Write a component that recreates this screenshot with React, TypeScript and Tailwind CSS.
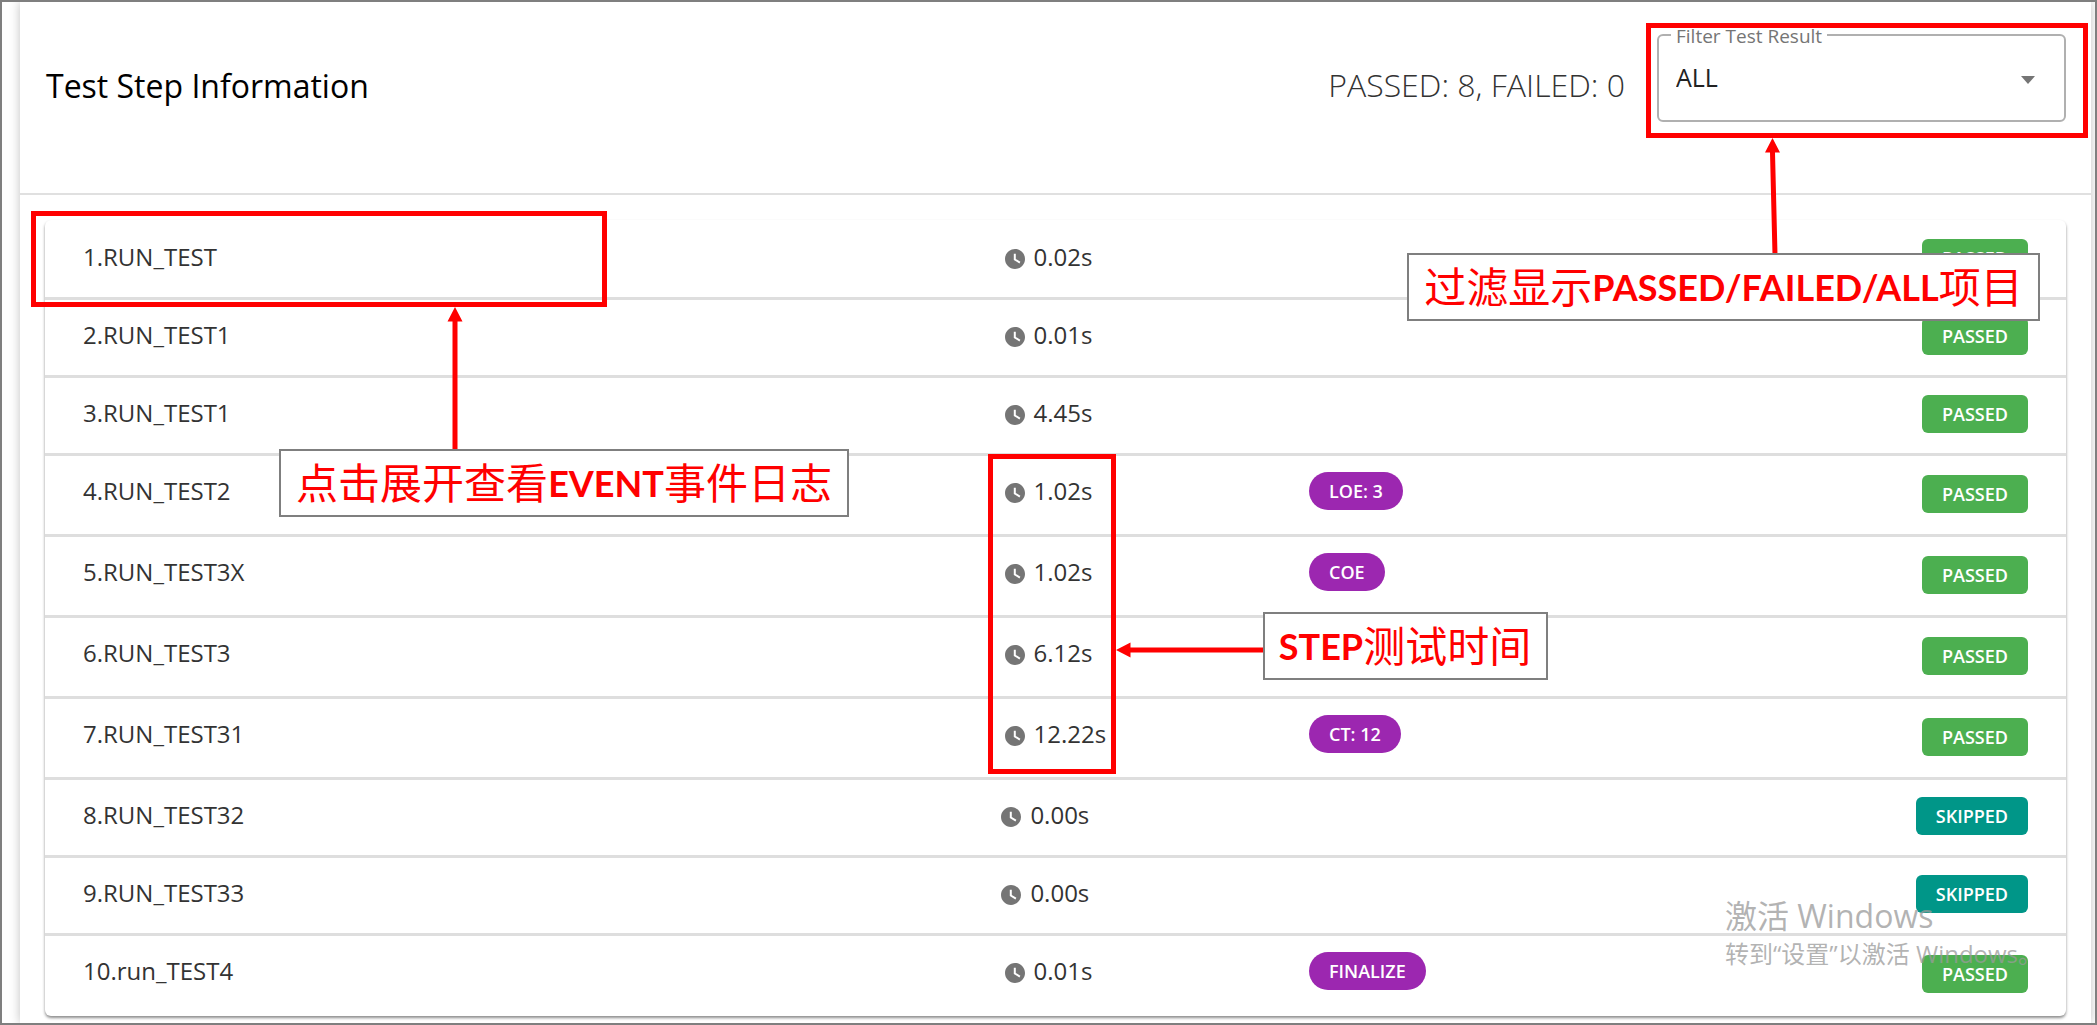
import { useState } from "react";

type Result = "PASSED" | "FAILED" | "SKIPPED";

interface Step {
  name: string;
  time: string;
  chip?: string;
  tall?: boolean;
  result: Result;
}

const steps: Step[] = [
  { name: "1.RUN_TEST", time: "0.02s", result: "PASSED" },
  { name: "2.RUN_TEST1", time: "0.01s", result: "PASSED" },
  { name: "3.RUN_TEST1", time: "4.45s", result: "PASSED" },
  { name: "4.RUN_TEST2", time: "1.02s", chip: "LOE: 3", tall: true, result: "PASSED" },
  { name: "5.RUN_TEST3X", time: "1.02s", chip: "COE", tall: true, result: "PASSED" },
  { name: "6.RUN_TEST3", time: "6.12s", tall: true, result: "PASSED" },
  { name: "7.RUN_TEST31", time: "12.22s", chip: "CT: 12", tall: true, result: "PASSED" },
  { name: "8.RUN_TEST32", time: "0.00s", result: "SKIPPED" },
  { name: "9.RUN_TEST33", time: "0.00s", result: "SKIPPED" },
  { name: "10.run_TEST4", time: "0.01s", chip: "FINALIZE", tall: true, result: "PASSED" },
];

const badgeColors: Record<Result, string> = {
  PASSED: "bg-[#4caf50]",
  FAILED: "bg-[#f44336]",
  SKIPPED: "bg-[#009688]",
};

function ClockIcon() {
  return (
    <svg viewBox="0 0 24 24" className="mt-1 size-6 shrink-0 fill-[#757575]" aria-hidden="true">
      <path d="M12 2C6.500 2 2 6.500 2 12s4.500 10 10 10 10-4.500 10-10S17.500 2 12 2zm4.400 14.400L10.800 13V6.800h2v5.200l4.600 2.800-1 1.600z" />
    </svg>
  );
}

function StepRow({ step }: { step: Step }) {
  return (
    <li className="border-b-[3px] border-[#dedede] last:border-b-0">
      <button
        type="button"
        className={`grid w-full grid-cols-[6fr_2fr_4fr_auto] items-start pr-[38px] pl-[38px] text-left text-2xl leading-[38px] text-[#333] ${
          step.tall ? "h-[78px] pt-4" : "h-[75px] pt-4"
        }`}
      >
        <span>{step.name}</span>
        <span className="flex items-center gap-[7px]">
          <ClockIcon />
          {step.time}
        </span>
        <span className="flex">
          {step.chip && (
            <span className="h-[38px] rounded-full bg-[#9c27b0] px-5 text-lg leading-[38px] font-semibold text-white">
              {step.chip}
            </span>
          )}
        </span>
        <span
          className={`h-[38px] rounded-md px-5 text-lg leading-[38px] font-semibold text-white ${
            badgeColors[step.result]
          } ${step.tall ? "mt-[3px]" : "mt-px"}`}
        >
          {step.result}
        </span>
      </button>
    </li>
  );
}

const callout =
  "absolute flex h-[68px] items-center justify-center border-2 border-[#7f7f7f] bg-white pb-1 whitespace-nowrap text-[42px] leading-none text-[#f00] font-['Noto_Sans_CJK_SC',sans-serif]";

function Latin({ children }: { children: string }) {
  return <b className="pt-1 font-['Lato',sans-serif] text-4xl font-bold">{children}</b>;
}

export default function App() {
  const [filter, setFilter] = useState("ALL");
  const passed = 8;
  const failed = 0;
  const visible = steps.filter((s) => filter === "ALL" || s.result === filter);

  return (
    <div className="relative min-h-screen overflow-hidden border-2 border-[#7f7f7f] bg-white pr-1 pl-[18px] font-['Open_Sans','Noto_Sans_CJK_SC',sans-serif]">
      <main className="min-h-[1021px] bg-white shadow-[0_0_10px_rgba(0,0,0,0.25)]">
        <header className="flex h-[193px] items-start justify-between border-b-2 border-[#e0e0e0] pr-[25px] pl-[26px]">
          <h1 className="mt-[60px] text-[32px] leading-[48px] text-black">Test Step Information</h1>
          <div className="flex items-start gap-8">
            <p className="mt-[59px] text-[32px] leading-[48px] font-light text-[#333]">
              PASSED: {passed}, FAILED: {failed}
            </p>
            <div className="relative mt-8 w-[409px]">
              <label
                htmlFor="result-filter"
                className="absolute -top-[10px] left-[14px] bg-white px-[5px] text-[19px] leading-6 text-[#757575]"
              >
                Filter Test Result
              </label>
              <select
                id="result-filter"
                value={filter}
                onChange={(e) => setFilter(e.target.value)}
                className="h-[88px] w-full appearance-none rounded-md border-2 border-[#b0b0b0] bg-white pr-12 pl-[17px] text-[25px] text-[#222]"
              >
                <option>ALL</option>
                <option>PASSED</option>
                <option>FAILED</option>
              </select>
              <svg
                viewBox="0 0 14 8"
                className="pointer-events-none absolute top-[42px] right-[31px] h-2 w-[14px] fill-[#757575]"
                aria-hidden="true"
              >
                <path d="M0 0h14L7 8z" />
              </svg>
            </div>
          </div>
        </header>
        <ul className="mt-[25px] mr-[25px] ml-[25px] rounded-md bg-white pt-[2px] pb-[2px] shadow-[0_2px_3px_rgba(0,0,0,0.45)]">
          {visible.map((step) => (
            <StepRow key={step.name} step={step} />
          ))}
        </ul>
      </main>

      <div className="pointer-events-none absolute top-[892px] right-[68px] w-[302px] whitespace-nowrap text-[#9a9a9a]/75">
        <p className="text-[32px] leading-[44px]">激活 Windows</p>
        <p className="text-2xl leading-8">转到“设置”以激活 Windows。</p>
      </div>

      <div className="pointer-events-none">
        <div className="absolute top-[209px] left-[29px] h-24 w-[576px] border-5 border-[#f00]" />
        <svg viewBox="0 0 16 144" className="absolute top-[305px] left-[445px] h-36 w-4 fill-[#f00]" aria-hidden="true">
          <path d="M8 0l7.500 14.500h-5V144h-5V14.500h-5z" />
        </svg>
        <div className={`${callout} top-[447px] left-[277px] w-[570px]`}>
          点击展开查看<Latin>EVENT</Latin>事件日志
        </div>

        <div className="absolute top-[21px] right-[7px] h-[115px] w-[442px] border-5 border-[#f00]" />
        <svg viewBox="0 0 18 117" className="absolute top-[136px] right-[312px] h-[117px] w-[18px] fill-[#f00]" aria-hidden="true">
          <path d="M7.500 0L15 14.500h-5L12.500 117h-5L5 14.500H0z" />
        </svg>
        <div className={`${callout} top-[251px] right-[55px] w-[633px]`}>
          过滤显示<Latin>PASSED/FAILED/ALL</Latin>项目
        </div>

        <div className="absolute top-[452px] left-1/2 -ml-[61px] h-80 w-32 border-5 border-[#f00]" />
        <svg viewBox="0 0 148 16" className="absolute top-[640px] left-1/2 ml-[67px] h-4 w-[148px] fill-[#f00]" aria-hidden="true">
          <path d="M0 8L14.500.500v5H148v5H14.500v5z" />
        </svg>
        <div className={`${callout} top-[610px] left-1/2 ml-[214px] w-[285px]`}>
          <Latin>STEP</Latin>测试时间
        </div>
      </div>
    </div>
  );
}
